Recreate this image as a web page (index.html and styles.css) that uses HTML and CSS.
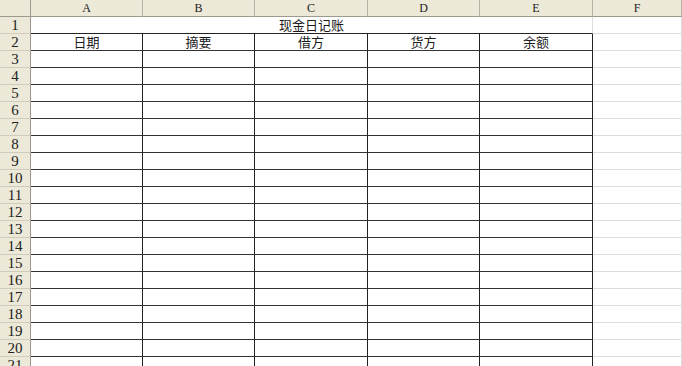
FILE: index.html
```html
<!DOCTYPE html>
<html lang="zh-CN">
<head>
    <meta charset="UTF-8">
    <title>现金日记账</title>
    <link rel="stylesheet" href="styles.css">
</head>
<body>
    <div class="sheet">
        <div class="corner"></div>
        <div class="ch">A</div><div class="ch">B</div><div class="ch">C</div><div class="ch">D</div><div class="ch">E</div><div class="ch">F</div>

        <div class="rh">1</div>
        <div class="title">现金日记账</div><div class="c"></div>

        <div class="rh">2</div>
        <div class="t">日期</div><div class="t">摘要</div><div class="t">借方</div><div class="t">货方</div><div class="t">余额</div><div class="c"></div>

        <div class="rh">3</div><div class="t"></div><div class="t"></div><div class="t"></div><div class="t"></div><div class="t"></div><div class="c"></div>
        <div class="rh">4</div><div class="t"></div><div class="t"></div><div class="t"></div><div class="t"></div><div class="t"></div><div class="c"></div>
        <div class="rh">5</div><div class="t"></div><div class="t"></div><div class="t"></div><div class="t"></div><div class="t"></div><div class="c"></div>
        <div class="rh">6</div><div class="t"></div><div class="t"></div><div class="t"></div><div class="t"></div><div class="t"></div><div class="c"></div>
        <div class="rh">7</div><div class="t"></div><div class="t"></div><div class="t"></div><div class="t"></div><div class="t"></div><div class="c"></div>
        <div class="rh">8</div><div class="t"></div><div class="t"></div><div class="t"></div><div class="t"></div><div class="t"></div><div class="c"></div>
        <div class="rh">9</div><div class="t"></div><div class="t"></div><div class="t"></div><div class="t"></div><div class="t"></div><div class="c"></div>
        <div class="rh">10</div><div class="t"></div><div class="t"></div><div class="t"></div><div class="t"></div><div class="t"></div><div class="c"></div>
        <div class="rh">11</div><div class="t"></div><div class="t"></div><div class="t"></div><div class="t"></div><div class="t"></div><div class="c"></div>
        <div class="rh">12</div><div class="t"></div><div class="t"></div><div class="t"></div><div class="t"></div><div class="t"></div><div class="c"></div>
        <div class="rh">13</div><div class="t"></div><div class="t"></div><div class="t"></div><div class="t"></div><div class="t"></div><div class="c"></div>
        <div class="rh">14</div><div class="t"></div><div class="t"></div><div class="t"></div><div class="t"></div><div class="t"></div><div class="c"></div>
        <div class="rh">15</div><div class="t"></div><div class="t"></div><div class="t"></div><div class="t"></div><div class="t"></div><div class="c"></div>
        <div class="rh">16</div><div class="t"></div><div class="t"></div><div class="t"></div><div class="t"></div><div class="t"></div><div class="c"></div>
        <div class="rh">17</div><div class="t"></div><div class="t"></div><div class="t"></div><div class="t"></div><div class="t"></div><div class="c"></div>
        <div class="rh">18</div><div class="t"></div><div class="t"></div><div class="t"></div><div class="t"></div><div class="t"></div><div class="c"></div>
        <div class="rh">19</div><div class="t"></div><div class="t"></div><div class="t"></div><div class="t"></div><div class="t"></div><div class="c"></div>
        <div class="rh">20</div><div class="t"></div><div class="t"></div><div class="t"></div><div class="t"></div><div class="t"></div><div class="c"></div>
        <div class="rh">21</div><div class="t"></div><div class="t"></div><div class="t"></div><div class="t"></div><div class="t"></div><div class="c"></div>
    </div>
</body>
</html>
```
FILE: styles.css
```css
html, body {
    margin: 0;
    height: 100%;
    overflow: hidden;
    background: #fff;
}

.sheet {
    display: grid;
    grid-template-columns: 31px 112px 112px 113px 112px 113px 1fr;
    grid-auto-rows: 17px;
    font-family: "Noto Sans CJK SC", "Liberation Sans", sans-serif;
    font-size: 13px;
    color: #1a1a1a;
}

.sheet > div {
    box-sizing: border-box;
    line-height: 16px;
    text-align: center;
    white-space: nowrap;
}

.corner,
.ch,
.rh {
    background-color: #ece9d8;
    font-family: "Liberation Serif", serif;
    color: #222;
}

.corner {
    border-right: 1px solid #9c9a8e;
    border-bottom: 1px solid #9c9a8e;
}

.ch {
    font-size: 12px;
    border-right: 1px solid #b5b2a3;
    border-bottom: 1px solid #9c9a8e;
}

.rh {
    font-size: 15px;
    line-height: 16px;
    border-right: 1px solid #9c9a8e;
    border-bottom: 1px solid #cfccbd;
}

.c {
    border-right: 1px solid #dcdcdc;
    border-bottom: 1px solid #dcdcdc;
}

.title {
    grid-column: span 5;
    border-right: 1px solid #dcdcdc;
    border-bottom: 1px solid #222;
}

.t {
    border-right: 1px solid #222;
    border-bottom: 1px solid #333;
}
```
